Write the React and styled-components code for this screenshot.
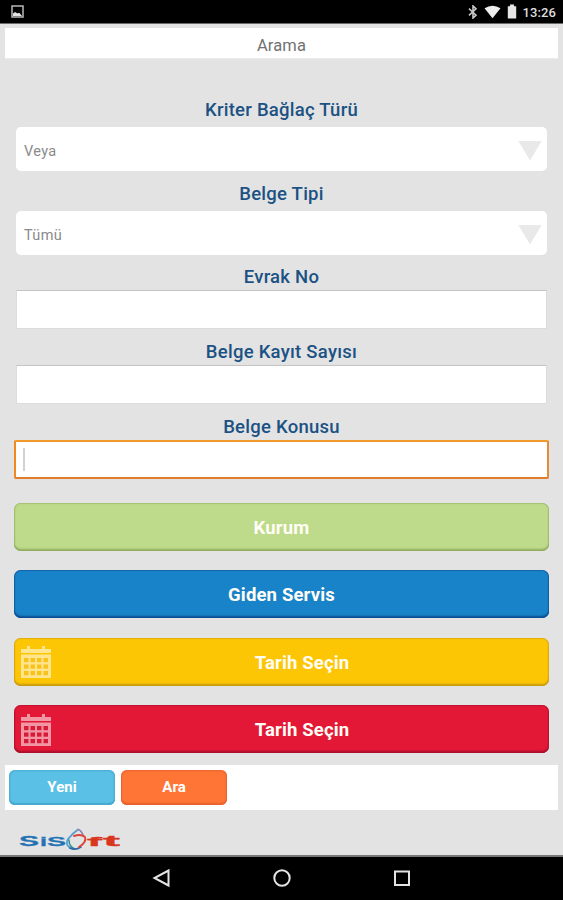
import React from 'react';
import styled, { createGlobalStyle, css } from 'styled-components';

const GlobalStyle = createGlobalStyle`
  * {
    box-sizing: border-box;
  }

  body {
    margin: 0;
    background-color: #e3e3e3;
    font-family: Roboto, "Liberation Sans", sans-serif;
  }
`;

const Screen = styled.div`
  display: flex;
  flex-direction: column;
  height: 900px;
  overflow: hidden;
  background-color: #e3e3e3;
`;

const StatusBar = styled.header`
  display: flex;
  align-items: center;
  justify-content: space-between;
  flex: none;
  height: 24px;
  padding: 0 7px 0 11px;
  background-color: #000;
  border-bottom: 1px solid #6b6b6b;
  svg {
    display: block;
  }
`;

const StatusIcons = styled.div`
  display: flex;
  align-items: center;
  gap: 6px;
`;

const Clock = styled.span`
  padding-top: 2px;
  color: #dedede;
  font-size: 13px;
  font-weight: 500;
  line-height: 15px;
  letter-spacing: 0.1px;
`;

const TitleBar = styled.h1`
  flex: none;
  height: 31px;
  margin: 4px 5px 0;
  padding-top: 2px;
  border-bottom: 1px solid #ececec;
  background-color: #fff;
  color: #717171;
  font-size: 16.5px;
  font-weight: 400;
  line-height: 31px;
  letter-spacing: 0.15px;
  text-align: center;
`;

const Form = styled.main`
  display: flex;
  flex-direction: column;
  flex: none;
  padding: 35px 14px 0;
`;

const Label = styled.label`
  display: flex;
  align-items: flex-end;
  justify-content: center;
  height: ${props => props.$height}px;
  padding-bottom: ${props => props.$gap}px;
  color: #1b5283;
  font-size: 18.5px;
  font-weight: 500;
  line-height: 22px;
  letter-spacing: 0.25px;
`;

const Select = styled.div`
  display: flex;
  align-items: center;
  justify-content: space-between;
  height: 44px;
  margin: 0 2px;
  padding: 6px 5px 0 8px;
  border-radius: 5px;
  background-color: #fff;
  color: #8a8a8a;
  font-size: 14.5px;
  line-height: 18px;
  letter-spacing: 0.35px;
`;

const Arrow = styled.span`
  width: 24px;
  height: 20px;
  margin-top: -3px;
  background-color: #e9e9e9;
  clip-path: polygon(0 0, 100% 0, 50% 100%);
`;

const Input = styled.div`
  display: flex;
  align-items: center;
  height: 39px;
  margin: 0 2px;
  border: 1px solid #dcdcdc;
  border-top-color: #c4c4c4;
  background-color: #fff;

  ${props => props.$focused && css`
    margin: 0;
    padding-left: 7px;
    border: 2px solid;
    border-color: #f39a2d #e58b39 #e27c2b #ef8a22;
    border-radius: 2px;
  `}
`;

const Caret = styled.span`
  width: 2px;
  height: 23px;
  background-color: #d0d3d5;
`;

const Actions = styled.div`
  display: flex;
  flex-direction: column;
  gap: 19.6px;
  margin-top: 23.5px;
`;

const ActionButton = styled.button`
  display: grid;
  grid-template-columns: ${props => (props.$icon ? '32px 1fr' : '1fr')};
  align-items: center;
  height: 48px;
  padding: ${props => (props.$icon ? '1px 0 0 6px' : '1px 0 0')};
  border: 0;
  border-radius: 7px;
  background-color: ${props => props.$color};
  box-shadow: inset 0 -2px 2px ${props => props.$edge}, inset 0 0 1px 0.5px ${props => props.$edge};
  color: #fffdf5;
  font-family: inherit;
  font-size: 18.5px;
  font-weight: 700;
  line-height: 22px;
  letter-spacing: 0.15px;
  text-align: center;
  svg {
    display: block;
  }
`;

const ButtonText = styled.span`
  padding-top: 1px;
  margin-left: ${props => (props.$icon ? '3px' : '0')};
`;

const Toolbar = styled.div`
  display: flex;
  flex: none;
  gap: 6px;
  height: 45px;
  margin: 11.7px 5px 0;
  padding: 5px 4px;
  background-color: #fff;
`;

const ToolButton = styled.button`
  width: 106px;
  height: 35px;
  padding: 0;
  border: 0;
  border-radius: 6px;
  background-color: ${props => props.$color};
  box-shadow: inset 0 0 2px 1px ${props => props.$edge}, inset 0 -2px 1px ${props => props.$edge};
  color: #fff;
  font-family: inherit;
  font-size: 15px;
  font-weight: 700;
  line-height: 20px;
`;

const Footer = styled.footer`
  flex: 1;
  padding: 17px 0 0 18px;
  svg {
    display: block;
  }
`;

const NavBar = styled.nav`
  display: flex;
  align-items: center;
  justify-content: center;
  flex: none;
  gap: 96px;
  height: 45px;
  padding-bottom: 2px;
  border-top: 2px solid #777;
  background-color: #000;
`;

function PictureIcon() {
  return (
    <svg width="13" height="13" viewBox="0 0 13 13">
      <rect x="1" y="1" width="11" height="11" fill="none" stroke="#b9b9b9" strokeWidth="1.5" />
      <path d="M2 11V8.500L4 7l2 1.300L8.500 8l2.500 3z" fill="#e4e4e4" />
    </svg>
  );
}

function BluetoothIcon() {
  return (
    <svg width="10" height="14" viewBox="0 0 10 14">
      <path d="M1 3.700l7 6.500L5 13V1l3 2.800L1 10.300" fill="none" stroke="#c9c9c9" strokeWidth="1.6" />
    </svg>
  );
}

function WifiIcon() {
  return (
    <svg width="17" height="14" viewBox="0 0 17 14">
      <path d="M.5 3.200Q8.500-1.800 16.500 3.200L8.500 13.200z" fill="#eee" />
    </svg>
  );
}

function BatteryIcon() {
  return (
    <svg width="10" height="15" viewBox="0 0 10 15">
      <path d="M3 .5h4v1.700h2.200v12.300H.8V2.200H3z" fill="#e6e6e6" />
    </svg>
  );
}

function CalendarIcon({ dots }) {
  return (
    <svg width="32" height="34" viewBox="0 0 32 34">
      <g fill="#fff" fillOpacity="0.55">
        <path d="M7 1h3v3h12V1h3v3h6v4H1V4h6z" />
        <path d="M1 9.500h30V33H1z" />
      </g>
      <g fill={dots}>
        {[13, 19.5, 26].map(y => [4, 10.5, 17, 23.5].map(x => (
          <rect key={`${x}-${y}`} x={x} y={y} width="4.5" height="4.2" />
        )))}
      </g>
    </svg>
  );
}

function SisoftLogo() {
  return (
    <svg width="104" height="26" viewBox="0 0 104 26">
      <g fontFamily="Liberation Sans, sans-serif" fontWeight="700" strokeWidth="0.3">
        <g fill="#2372b5" stroke="#2372b5">
          <text x="1" y="19" fontSize="14.5" textLength="20" lengthAdjust="spacingAndGlyphs">S</text>
          <text x="22" y="19" fontSize="13.5" textLength="7" lengthAdjust="spacingAndGlyphs">i</text>
          <text x="29" y="19" fontSize="13.5" textLength="19" lengthAdjust="spacingAndGlyphs">S</text>
        </g>
        <g fill="#d9361f" stroke="#d9361f">
          <text x="69" y="19" fontSize="13" textLength="15" lengthAdjust="spacingAndGlyphs">f</text>
          <text x="85" y="19" fontSize="14" textLength="17" lengthAdjust="spacingAndGlyphs">t</text>
        </g>
      </g>
      <g fill="none" strokeLinecap="round">
        <path d="M60 2.500Q55 6 50 12Q47 17 52 21" stroke="#549ed0" strokeWidth="1.8" />
        <path d="M51 13Q51 20 57 22" stroke="#258c91" strokeWidth="1.4" />
        <path d="M52 21Q57 24 63 20" stroke="#2c66a8" strokeWidth="1.6" />
        <path d="M60 2.500Q63 3 65 8" stroke="#8d82ad" strokeWidth="1.6" />
        <path d="M56 9Q63 6.500 67 10Q69 15 61 20" stroke="#d9443b" strokeWidth="1.9" />
      </g>
    </svg>
  );
}

export default function App() {
  return (
    <Screen>
      <GlobalStyle />
      <StatusBar>
        <PictureIcon />
        <StatusIcons>
          <BluetoothIcon />
          <WifiIcon />
          <BatteryIcon />
          <Clock>13:26</Clock>
        </StatusIcons>
      </StatusBar>
      <TitleBar>Arama</TitleBar>
      <Form>
        <Label $height={33} $gap={6}>Kriter Bağlaç Türü</Label>
        <Select>Veya<Arrow /></Select>
        <Label $height={40} $gap={6}>Belge Tipi</Label>
        <Select>Tümü<Arrow /></Select>
        <Label $height={35} $gap={2}>Evrak No</Label>
        <Input />
        <Label $height={36} $gap={2}>Belge Kayıt Sayısı</Label>
        <Input />
        <Label $height={36} $gap={2}>Belge Konusu</Label>
        <Input $focused><Caret /></Input>
        <Actions>
          <ActionButton $color="#bddb8a" $edge="#91ae5e">
            <ButtonText>Kurum</ButtonText>
          </ActionButton>
          <ActionButton $color="#1983c9" $edge="#0c4c91">
            <ButtonText>Giden Servis</ButtonText>
          </ActionButton>
          <ActionButton $icon $color="#fdc605" $edge="#c99a10">
            <CalendarIcon dots="#f9c21b" />
            <ButtonText $icon>Tarih Seçin</ButtonText>
          </ActionButton>
          <ActionButton $icon $color="#e21836" $edge="#a90f2c">
            <CalendarIcon dots="#d71b38" />
            <ButtonText $icon>Tarih Seçin</ButtonText>
          </ActionButton>
        </Actions>
      </Form>
      <Toolbar>
        <ToolButton $color="#5bc0e6" $edge="#48a8d0">Yeni</ToolButton>
        <ToolButton $color="#ff7536" $edge="#e9642f">Ara</ToolButton>
      </Toolbar>
      <Footer>
        <SisoftLogo />
      </Footer>
      <NavBar>
        <svg width="24" height="24" viewBox="0 0 24 24">
          <path d="M18.500 4.500v15L4.500 12z" fill="none" stroke="#e4e4e4" strokeWidth="2" />
        </svg>
        <svg width="24" height="24" viewBox="0 0 24 24">
          <circle cx="12" cy="12" r="7.700" fill="none" stroke="#e4e4e4" strokeWidth="2" />
        </svg>
        <svg width="24" height="24" viewBox="0 0 24 24">
          <rect x="5" y="5.500" width="14" height="13.500" fill="none" stroke="#e4e4e4" strokeWidth="2" />
        </svg>
      </NavBar>
    </Screen>
  );
}
